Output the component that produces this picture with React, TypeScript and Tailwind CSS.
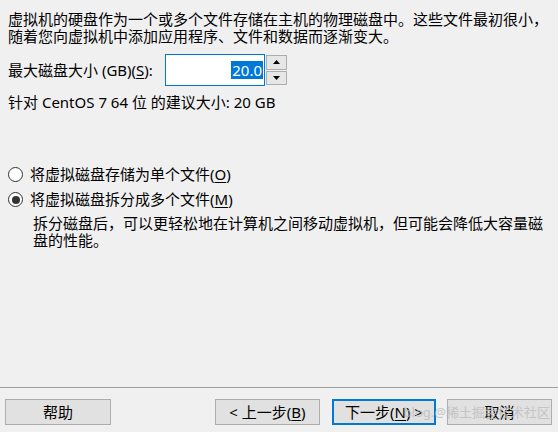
import React from "react";

const font = { fontFamily: '"Noto Sans", "Noto Sans CJK SC", sans-serif' };

function Btn({ children, def = false, w }: { children: React.ReactNode; def?: boolean; w: string }) {
  return (
    <div
      className={`${w} h-[26px] flex items-center justify-center bg-[#e1e1e1] text-[15px] leading-none text-black ${
        def ? "border-2 border-[#0078d7]" : "border border-[#adadad]"
      }`}
    >
      {children}
    </div>
  );
}

function Radio({ checked }: { checked?: boolean }) {
  return (
    <div className="w-[15px] h-[15px] rounded-full border border-[#333333] bg-white flex items-center justify-center shrink-0">
      {checked && <div className="w-[8px] h-[8px] rounded-full bg-[#333333]" />}
    </div>
  );
}

export default function App() {
  return (
    <div className="relative w-[558px] h-[432px] bg-[#f0f0f0] text-black flex flex-col overflow-hidden" style={font}>
      <div className="flex-1 px-[8px] pt-[11px] text-[15px] leading-[17px]">
        <p className="whitespace-nowrap">
          虚拟机的硬盘作为一个或多个文件存储在主机的物理磁盘中。这些文件最初很小，
          <br />
          随着您向虚拟机中添加应用程序、文件和数据而逐渐变大。
        </p>
        <div className="mt-[9px] flex items-center h-[32px]">
          <span className="w-[157px] whitespace-nowrap">
            最大磁盘大小 (GB)(<span className="underline underline-offset-2">S</span>):
          </span>
          <div className="w-[100px] h-[32px] bg-white border border-[#0078d7] flex items-center justify-end pr-[1px]">
            <span className="bg-[#0078d7] text-white text-[15px] leading-[18px] h-[18px] px-[1px]">20.0</span>
          </div>
          <div className="ml-[1px] w-[21px] h-[30px] flex flex-col gap-[1px]">
            <div className="flex-1 border border-[#adadad] bg-[#e6e6e6] flex items-center justify-center">
              <svg width="7" height="4" viewBox="0 0 7 4">
                <path d="M0 4 L3.5 0 L7 4 Z" fill="#000" />
              </svg>
            </div>
            <div className="flex-1 border border-[#adadad] bg-[#e6e6e6] flex items-center justify-center">
              <svg width="7" height="4" viewBox="0 0 7 4">
                <path d="M0 0 L3.5 4 L7 0 Z" fill="#000" />
              </svg>
            </div>
          </div>
        </div>
        <p className="mt-[8px] whitespace-nowrap">针对 CentOS 7 64 位 的建议大小: 20 GB</p>

        <div className="mt-[55px] flex items-center gap-[7px] h-[17px]">
          <Radio />
          <span>
            将虚拟磁盘存储为单个文件(<span className="underline underline-offset-2">O</span>)
          </span>
        </div>
        <div className="mt-[8px] flex items-center gap-[7px] h-[17px]">
          <Radio checked />
          <span>
            将虚拟磁盘拆分成多个文件(<span className="underline underline-offset-2">M</span>)
          </span>
        </div>
        <p className="mt-[7px] pl-[25px] whitespace-nowrap">
          拆分磁盘后，可以更轻松地在计算机之间移动虚拟机，但可能会降低大容量磁
          <br />
          盘的性能。
        </p>
      </div>

      <div className="h-px bg-[#a0a0a0]" />
      <div className="h-[44px] pt-[11px] pl-[5px] pr-[6px] flex items-start">
        <Btn w="w-[106px]">帮助</Btn>
        <div className="flex-1" />
        <Btn w="w-[105px]">
          &lt; 上一步(<span className="underline underline-offset-2">B</span>)
        </Btn>
        <div className="w-[12px]" />
        <Btn w="w-[104px]" def>
          下一步(<span className="underline underline-offset-2">N</span>) &gt;
        </Btn>
        <div className="w-[11px]" />
        <Btn w="w-[105px]">取消</Btn>
      </div>

      <div className="absolute right-[8px] top-[403px] text-[13px] leading-[18px] text-[#bdbdbd] opacity-80 pointer-events-none whitespace-nowrap">
        blog.@稀土掘金技术社区
      </div>
    </div>
  );
}
